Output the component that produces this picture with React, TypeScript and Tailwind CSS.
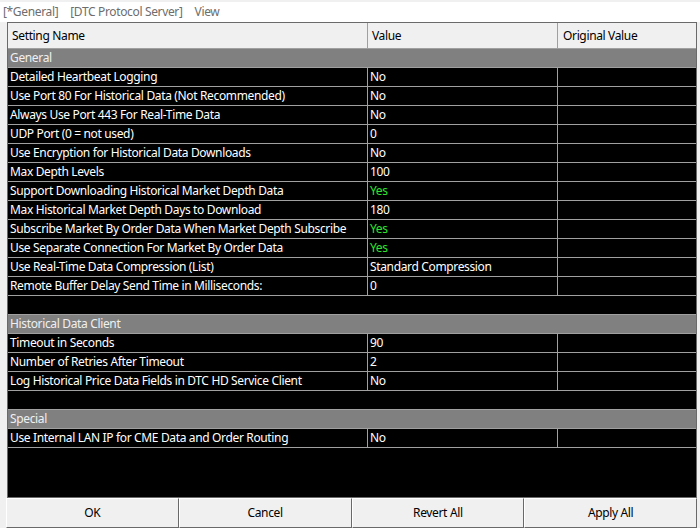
import React from "react";

type Row =
  | { kind: "group"; label: string }
  | { kind: "empty" }
  | { kind: "item"; label: string; value: string; green?: boolean };

const rows: Row[] = [
  { kind: "group", label: "General" },
  { kind: "item", label: "Detailed Heartbeat Logging", value: "No" },
  { kind: "item", label: "Use Port 80 For Historical Data (Not Recommended)", value: "No" },
  { kind: "item", label: "Always Use Port 443 For Real-Time Data", value: "No" },
  { kind: "item", label: "UDP Port (0 = not used)", value: "0" },
  { kind: "item", label: "Use Encryption for Historical Data Downloads", value: "No" },
  { kind: "item", label: "Max Depth Levels", value: "100" },
  { kind: "item", label: "Support Downloading Historical Market Depth Data", value: "Yes", green: true },
  { kind: "item", label: "Max Historical Market Depth Days to Download", value: "180" },
  { kind: "item", label: "Subscribe Market By Order Data When Market Depth Subscribe", value: "Yes", green: true },
  { kind: "item", label: "Use Separate Connection For Market By Order Data", value: "Yes", green: true },
  { kind: "item", label: "Use Real-Time Data Compression (List)", value: "Standard Compression" },
  { kind: "item", label: "Remote Buffer Delay Send Time in Milliseconds:", value: "0" },
  { kind: "empty" },
  { kind: "group", label: "Historical Data Client" },
  { kind: "item", label: "Timeout in Seconds", value: "90" },
  { kind: "item", label: "Number of Retries After Timeout", value: "2" },
  { kind: "item", label: "Log Historical Price Data Fields in DTC HD Service Client", value: "No" },
  { kind: "empty" },
  { kind: "group", label: "Special" },
  { kind: "item", label: "Use Internal LAN IP for CME Data and Order Routing", value: "No" },
];

function GridRow({ row }: { row: Row }) {
  if (row.kind === "group") {
    return (
      <div className="h-[19px] bg-[#808080] border-b border-[#a0a0a0] flex items-center pl-[2px] text-[#f0f0f0] leading-none">
        {row.label}
      </div>
    );
  }
  if (row.kind === "empty") {
    return <div className="h-[19px] bg-black border-b border-[#a0a0a0]" />;
  }
  return (
    <div className="h-[19px] bg-black border-b border-[#a0a0a0] flex text-white leading-none">
      <div className="w-[360px] border-r border-[#a0a0a0] flex items-center pl-[2px] whitespace-nowrap">
        {row.label}
      </div>
      <div
        className={
          "w-[190px] border-r border-[#a0a0a0] flex items-center pl-[2px] " +
          (row.green ? "text-[#2ee62e]" : "text-white")
        }
      >
        {row.value}
      </div>
      <div className="flex-1" />
    </div>
  );
}

export default function App() {
  return (
    <div
      className="w-[700px] h-[528px] bg-[#f0f0f0] flex flex-col text-[12px] tracking-[-0.35px] overflow-hidden"
      style={{ fontFamily: '"Segoe UI", "Noto Sans", "Liberation Sans", sans-serif' }}
    >
      {/* Menu strip */}
      <div className="h-[20px] mt-[2px] bg-white flex items-center gap-[12px] pl-[3px] text-[#6d6d6d]">
        <span>[*General]</span>
        <span>[DTC Protocol Server]</span>
        <span>View</span>
      </div>

      {/* Grid */}
      <div className="flex-1 ml-[7px] mr-[3px] border border-[#6a6a6a] flex flex-col bg-black min-h-0">
        <div className="h-[26px] bg-[#f0f0f0] border-b border-[#a0a0a0] flex text-black">
          <div className="w-[360px] border-r border-[#a0a0a0] flex items-center pl-[4px]">Setting Name</div>
          <div className="w-[190px] border-r border-[#a0a0a0] flex items-center pl-[4px]">Value</div>
          <div className="flex-1 flex items-center pl-[5px]">Original Value</div>
        </div>
        {rows.map((r, i) => (
          <GridRow key={i} row={r} />
        ))}
        <div className="flex-1 bg-black" />
      </div>

      {/* Buttons */}
      <div className="h-[30px] ml-[6px] mr-[3px] flex">
        {["OK", "Cancel", "Revert All", "Apply All"].map((b) => (
          <button
            key={b}
            className="flex-1 h-full bg-[#f0f0f0] border-t border-l border-white border-b border-r border-b-[#696969] border-r-[#696969] text-black text-[12px]"
          >
            {b}
          </button>
        ))}
      </div>
    </div>
  );
}
